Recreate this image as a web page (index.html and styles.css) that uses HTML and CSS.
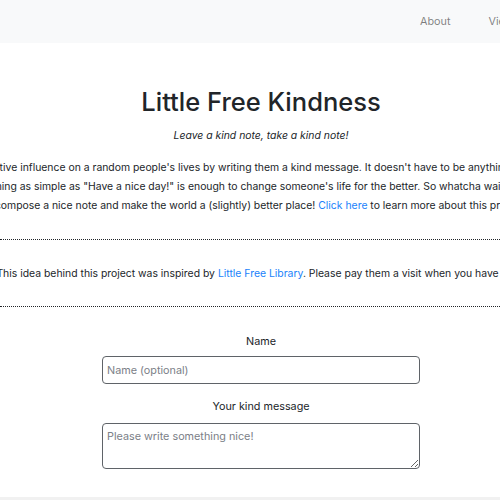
FILE: index.html
```html
<!DOCTYPE html>
<html lang="en">
<head>
<meta charset="utf-8">
<title>Little Free Kindness</title>
<link rel="stylesheet" href="styles.css">
</head>
<body>
<div class="page">
  <nav class="navbar">
    <ul class="nav">
      <li><a class="nav-link" href="#">About</a></li>
      <li><a class="nav-link" href="#">View Notes</a></li>
    </ul>
  </nav>
  <main class="main">
    <h1 class="title">Little Free Kindness</h1>
    <p class="tagline">Leave a kind note, take a kind note!</p>
    <p class="intro">Make a positive influence on a random people's lives by writing them a kind message. It doesn't have to be anything extraordinary.<br>Something as simple as "Have a nice day!" is enough to change someone's life for the better. So whatcha waiting for? Go<br>compose a nice note and make the world a (slightly) better place! <a href="#">Click here</a> to learn more about this project.</p>
    <hr class="divider">
    <p class="credit">This idea behind this project was inspired by <a href="#">Little Free Library</a>. Please pay them a visit when you have time.</p>
    <hr class="divider divider-bottom">
    <form class="note-form">
      <label class="form-label" for="name">Name</label>
      <input class="form-input" id="name" type="text" placeholder="Name (optional)">
      <label class="form-label form-label-second" for="message">Your kind message</label>
      <textarea class="form-input form-textarea" id="message" placeholder="Please write something nice!"></textarea>
    </form>
  </main>
  <footer class="footer"></footer>
</div>
</body>
</html>
```

FILE: styles.css
```css
html, body {
  margin: 0;
  padding: 0;
  overflow: hidden;
  background: #fff;
}

body {
  font-family: Inter, "Liberation Sans", Arial, sans-serif;
  font-size: 10.4px;
  line-height: 19px;
  color: #212529;
}

.page {
  width: 522px;
}

a {
  color: #1a82fb;
  text-decoration: none;
}

.navbar {
  height: 43px;
  background: #f8f9fa;
  display: flex;
  align-items: center;
  padding-left: 420px;
}

.nav {
  list-style: none;
  margin: 0;
  padding: 0;
  display: flex;
  gap: 38px;
  white-space: nowrap;
}

.nav-link {
  color: rgba(0, 0, 0, 0.5);
  font-size: 10.8px;
}

.main {
  display: flex;
  flex-direction: column;
  align-items: center;
  text-align: center;
}

.title {
  margin: 43px 0 0;
  font-size: 25.5px;
  line-height: 32px;
  font-weight: 500;
}

.tagline {
  margin: 7.5px 0 0;
  font-style: italic;
}

.intro {
  margin: 13px 0 0;
  white-space: nowrap;
}

.divider {
  align-self: stretch;
  margin: 24px 0 0;
  border: 0;
  border-top: 1px dotted #212529;
  height: 0;
}

.divider-bottom {
  margin-top: 23px;
}

.credit {
  margin: 24px 0 0;
  white-space: nowrap;
}

.note-form {
  margin-top: 25px;
  display: flex;
  flex-direction: column;
  align-items: center;
}

.form-label {
  display: block;
  font-size: 10.8px;
}

.form-label-second {
  margin-top: 13px;
}

.form-input {
  box-sizing: border-box;
  width: 318px;
  height: 28px;
  margin-top: 5.5px;
  padding: 0 4px;
  border: 1px solid #5f6368;
  border-radius: 4px;
  font-family: inherit;
  font-size: 10.8px;
  color: #495057;
  background: #fff;
}

.form-input::placeholder {
  color: #7b8087;
}

.form-textarea {
  height: 46px;
  margin-top: 6.5px;
  padding: 5px 4px;
  resize: vertical;
  line-height: 16px;
}

.footer {
  margin-top: 28px;
  height: 40px;
  background: #f1f1f1;
}
```
